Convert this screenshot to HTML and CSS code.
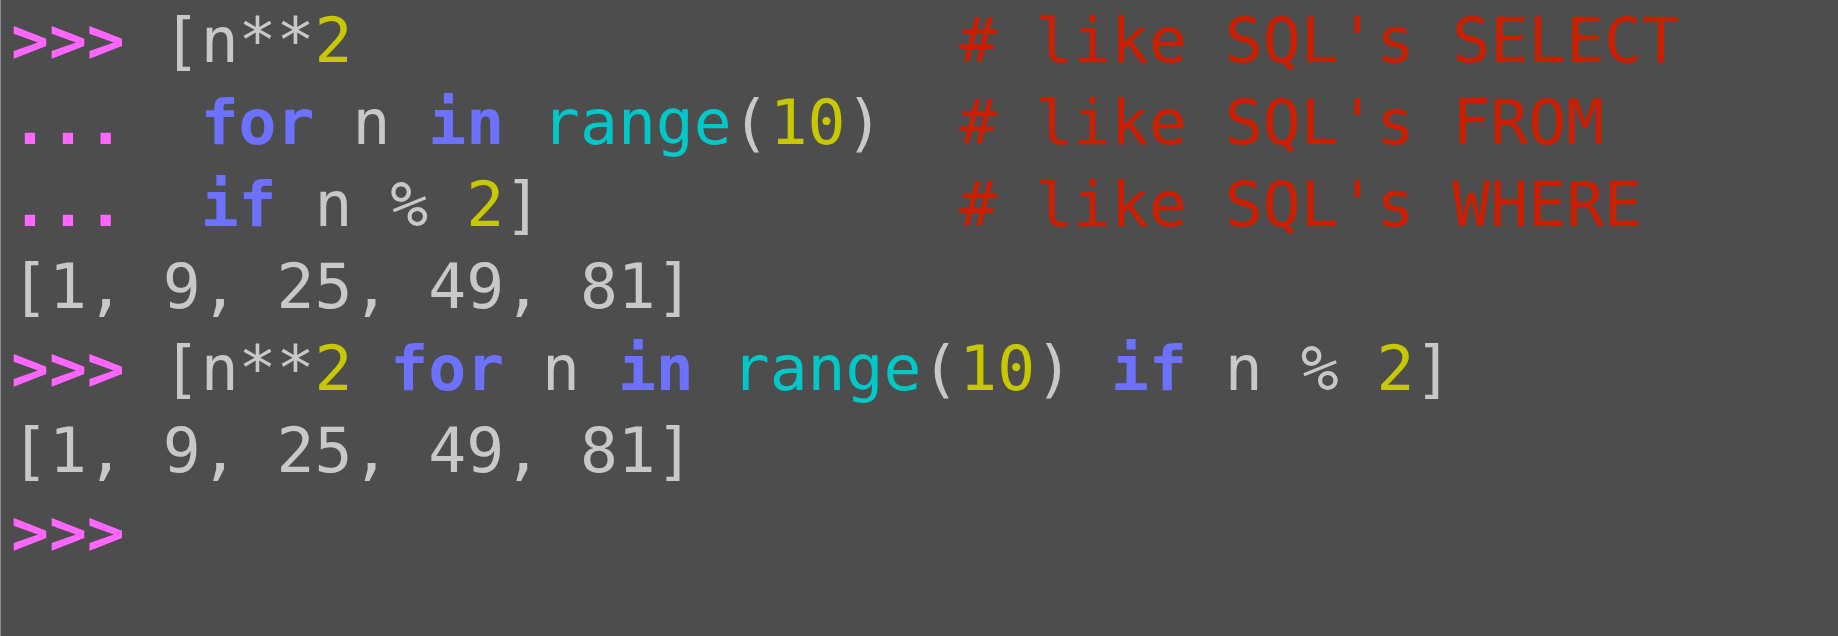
FILE: index.html
```html
<!DOCTYPE html>
<html>
<head>
<meta charset="utf-8">
<link rel="stylesheet" href="styles.css">
</head>
<body>
<div class="term">
<pre class="code"><span class="pr">&gt;&gt;&gt;</span> [n**<span class="num">2</span>                <span class="cm"># like SQL's SELECT</span>
<span class="pr">...</span>  <span class="kw">for</span> n <span class="kw">in</span> <span class="fn">range</span>(<span class="num">10</span>)  <span class="cm"># like SQL's FROM</span>
<span class="pr">...</span>  <span class="kw">if</span> n % <span class="num">2</span>]           <span class="cm"># like SQL's WHERE</span>
[1, 9, 25, 49, 81]
<span class="pr">&gt;&gt;&gt;</span> [n**<span class="num">2</span> <span class="kw">for</span> n <span class="kw">in</span> <span class="fn">range</span>(<span class="num">10</span>) <span class="kw">if</span> n % <span class="num">2</span>]
[1, 9, 25, 49, 81]
<span class="pr">&gt;&gt;&gt;</span> </pre>
</div>
</body>
</html>
```

FILE: styles.css
```css
html, body {
  margin: 0;
  padding: 0;
  background: #4d4d4d;
  height: 100%;
  overflow: hidden;
}
.term {
  height: 100%;
  border-left: 1px solid #8c8c8c;
  box-sizing: border-box;
  padding: 0 0 0 10px;
}
.code {
  margin: 0;
  font-family: "DejaVu Sans Mono", monospace;
  font-size: 63px;
  line-height: 82px;
  color: #c8c8c8;
}
.pr { color: #ff66ff; font-weight: bold; }
.kw { color: #6c72ff; font-weight: bold; }
.fn { color: #00c8c8; }
.num { color: #c8c800; }
.cm { color: #cc1f00; }
```
